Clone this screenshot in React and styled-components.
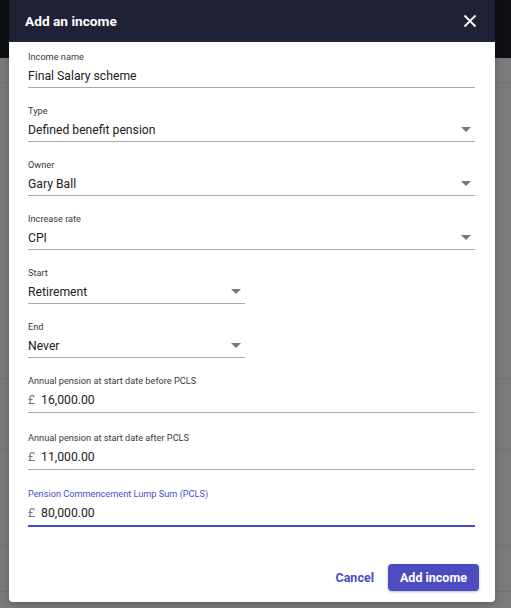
import React from 'react';
import styled, { createGlobalStyle } from 'styled-components';

const GlobalStyle = createGlobalStyle`
  html, body {
    margin: 0;
    padding: 0;
    background: #7b7b7b;
    font-family: Roboto, 'Liberation Sans', sans-serif;
  }
`;

const Screen = styled.div`
  position: relative;
  width: 511px;
  height: 608px;
  overflow: hidden;
  background: #7b7b7b;
`;

const PageTop = styled.div`
  height: 58px;
  background: #0e0f13;
`;

const PageRow = styled.div`
  height: ${(p) => p.h}px;
  border-bottom: 1px solid #737373;
`;

const Dialog = styled.div`
  position: absolute;
  left: 9px;
  top: 0;
  width: 486px;
  height: 602px;
  background: #fff;
  border-radius: 0 0 4px 4px;
  display: flex;
  flex-direction: column;
  box-shadow: 0 2px 8px rgba(0, 0, 0, 0.25);
`;

const Header = styled.div`
  height: 42px;
  background: #1f2135;
  display: flex;
  align-items: center;
  justify-content: space-between;
  padding: 0 18px 0 16px;
  flex-shrink: 0;
`;

const Title = styled.h2`
  margin: 0;
  color: #fff;
  font-size: 13.7px;
  font-weight: 700;
`;

const CloseButton = styled.button`
  border: 0;
  background: none;
  padding: 0;
  display: flex;
  cursor: pointer;
`;

const Body = styled.div`
  flex: 1;
  padding: 9px 20px 0 19px;
  display: flex;
  flex-direction: column;
`;

const Field = styled.div`
  width: ${(p) => (p.half ? '217px' : '100%')};
  height: ${(p) => (p.money ? 56.5 : 54)}px;
  display: flex;
  flex-direction: column;
`;

const Label = styled.label`
  font-size: 9.2px;
  color: ${(p) => (p.active ? '#4b4ccc' : '#3a3a3a')};
  line-height: 12px;
  margin-bottom: 1px;
`;

const Control = styled.div`
  display: flex;
  align-items: center;
  height: ${(p) => (p.money ? 24 : 23)}px;
  border-bottom: ${(p) => (p.active ? '2px solid #4b4ccc' : '1px solid #a9a9a9')};
  font-size: 12.2px;
  color: #222;
`;

const Value = styled.span`
  flex: 1;
`;

const Currency = styled.span`
  color: #777;
  margin-right: 6px;
`;

const Caret = styled.span`
  width: 0;
  height: 0;
  border-left: 5px solid transparent;
  border-right: 5px solid transparent;
  border-top: 5px solid #777;
  margin-right: 4px;
`;

const Footer = styled.div`
  display: flex;
  justify-content: flex-end;
  align-items: center;
  gap: 14px;
  padding: 0 16px 11px 0;
`;

const TextButton = styled.button`
  border: 0;
  background: none;
  color: #4b4cc2;
  font-family: inherit;
  font-size: 12.5px;
  font-weight: 700;
  padding: 0;
`;

const PrimaryButton = styled.button`
  border: 0;
  background: #4b4cc2;
  color: #fff;
  border-radius: 4px;
  height: 27px;
  padding: 0 12px;
  font-family: inherit;
  font-size: 12.5px;
  font-weight: 700;
  box-shadow: 0 1px 3px rgba(0, 0, 0, 0.25);
`;

const fields = [
  { label: 'Income name', value: 'Final Salary scheme' },
  { label: 'Type', value: 'Defined benefit pension', select: true },
  { label: 'Owner', value: 'Gary Ball', select: true },
  { label: 'Increase rate', value: 'CPI', select: true },
  { label: 'Start', value: 'Retirement', select: true, half: true },
  { label: 'End', value: 'Never', select: true, half: true },
  { label: 'Annual pension at start date before PCLS', value: '16,000.00', money: true },
  { label: 'Annual pension at start date after PCLS', value: '11,000.00', money: true },
  { label: 'Pension Commencement Lump Sum (PCLS)', value: '80,000.00', money: true, active: true },
];

const App = () => {
  return (
    <Screen>
      <GlobalStyle />
      <PageTop />
      <PageRow h={24} />
      <PageRow h={295} />
      <PageRow h={70} />
      <PageRow h={95} />
      <PageRow h={45} />

      <Dialog>
        <Header>
          <Title>Add an income</Title>
          <CloseButton aria-label='close'>
            <svg width='14' height='14' viewBox='0 0 14 14'>
              <path d='M1.5 1.5 L12.5 12.5 M12.5 1.5 L1.5 12.5' stroke='#fff' strokeWidth='1.8' />
            </svg>
          </CloseButton>
        </Header>

        <Body>
          {fields.map((f) => (
            <Field key={f.label} half={f.half} money={f.money}>
              <Label active={f.active}>{f.label}</Label>
              <Control active={f.active} money={f.money}>
                {f.money && <Currency>£</Currency>}
                <Value>{f.value}</Value>
                {f.select && <Caret />}
              </Control>
            </Field>
          ))}
        </Body>

        <Footer>
          <TextButton>Cancel</TextButton>
          <PrimaryButton>Add income</PrimaryButton>
        </Footer>
      </Dialog>
    </Screen>
  );
};

export default App;
